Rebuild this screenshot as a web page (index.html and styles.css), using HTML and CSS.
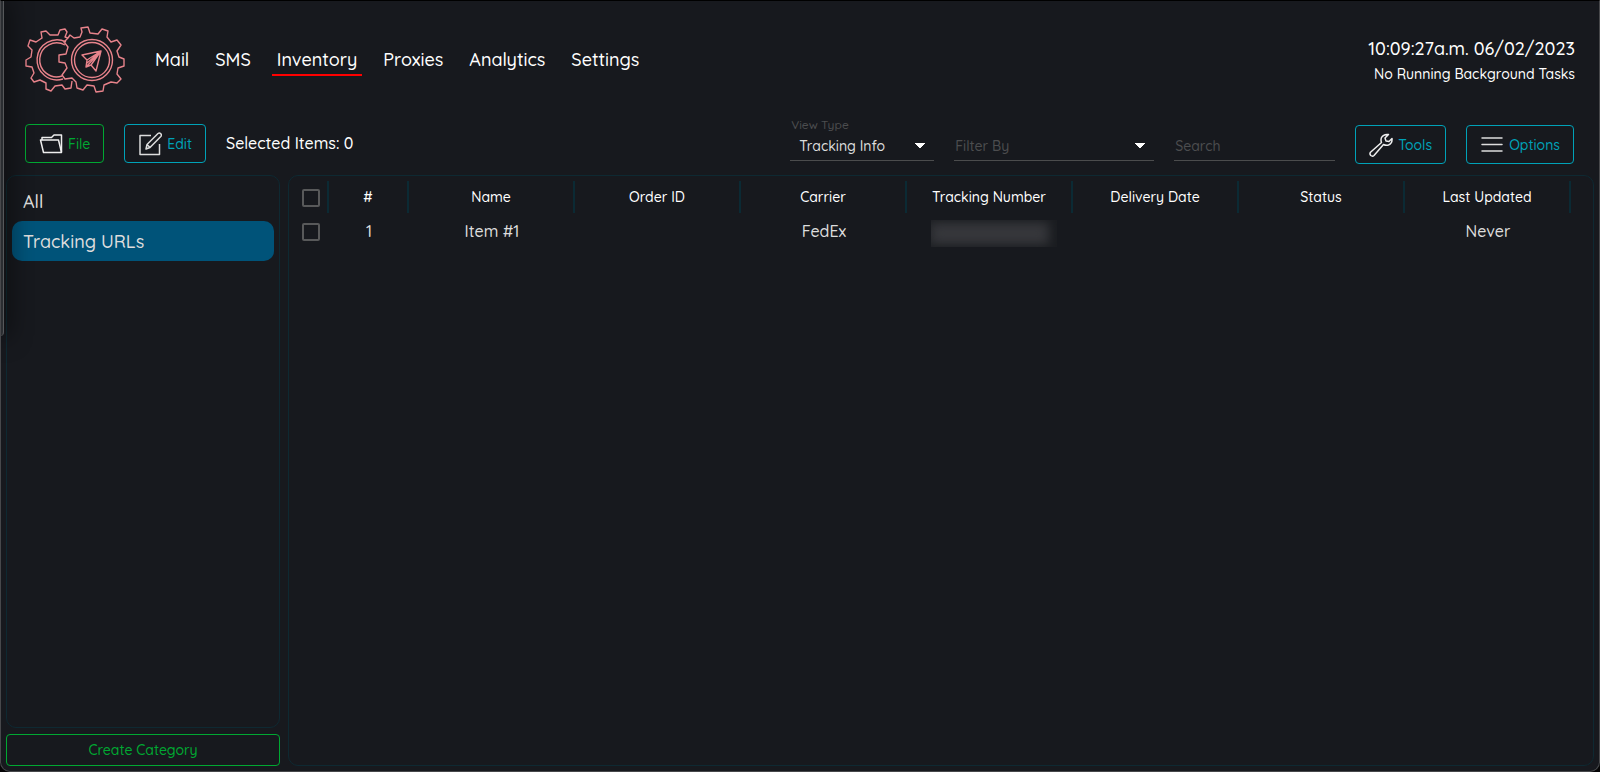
FILE: index.html
```html
<!DOCTYPE html>
<html lang="en">
  <head>
    <meta charset="UTF-8" />
    <meta name="viewport" content="width=device-width, initial-scale=1.0" />
    <title>Inventory</title>
    <link rel="stylesheet" href="styles.css">
  </head>

  <body>
    <div class="app">
      <header class="header">
        <svg class="logo" viewBox="0 0 100 68" fill="none" stroke="#e8838b" stroke-width="1.4" stroke-linejoin="round">
          <path d="M43 12 L40 11 L42 6 L40 3 L35 4 L33 9 L25 9 L21 5 L16 6 L17 12 L11 16 L5 14 L3 20 L7 24 L6 31 L1 34 L1 40 L7 41 L9 47 L6 52 L9 56 L15 54 L21 57 L21 63 L26 65 L30 60 L37 59 L40 63 L46 62 L47 55" />
          <path d="M43 12 L45 9 L49 12 L55 11 L57 6 L56 2 L63 1 L65 7 L73 8 L77 3 L83 5 L82 11 L86 16 L92 14 L96 19 L92 25 L94 31 L99 33 L99 40 L93 42 L92 48 L96 53 L92 57 L86 56 L79 59 L78 65 L71 66 L69 60 L62 59 L58 64 L52 62 L51 56 L47 52 L40 53 L37 49 L42 42 L40 37 L34 36 L34 29 L41 28 L43 21 L39 16 Z" />
          <path d="M41 16 A20 20 0 1 0 38 53" />
          <path d="M40 19 A17 17 0 1 0 37 50" />
          <circle cx="67" cy="34" r="20.5" />
          <circle cx="67" cy="34" r="17.5" />
          <path d="M76 25 L57 29 L62 34 L61 41 L66 39 L71 45 Z M62 34 L76 25 L61 41 M76 25 L66 39 M76 25 L62 37" />
        </svg>

        <nav class="nav">
          <a href="#">Mail</a>
          <a href="#">SMS</a>
          <a href="#" class="active">Inventory</a>
          <a href="#">Proxies</a>
          <a href="#">Analytics</a>
          <a href="#">Settings</a>
        </nav>

        <div class="status">
          <div class="clock">10:09:27a.m. 06/02/2023</div>
          <div class="tasks">No Running Background Tasks</div>
        </div>
      </header>

      <div class="toolbar">
        <div class="actions">
          <button type="button" class="btn btn-green">
            <svg class="icon" viewBox="0 0 24 24" fill="none" stroke="#eee" stroke-width="1.5" stroke-linejoin="round">
              <path d="M1.500 8 H19.500 L22.500 20.500 H4.500 Z" />
              <path d="M3 8 V5.500 H12.500 L15 3 H22.500 V20" />
            </svg>
            File
          </button>
          <button type="button" class="btn btn-blue">
            <svg class="icon" viewBox="0 0 24 24" fill="none" stroke="#ddd" stroke-width="1.5" stroke-linejoin="round">
              <path d="M13 3.500 H2 V22.500 H21.500 V12" />
              <path d="M8 17 L9 12.500 L20 1.500 Q21.500 0.500 22.800 1.800 Q24 3.200 22.800 4.500 L12 15.500 Z M9 12.500 L12 15.500" />
            </svg>
            Edit
          </button>
          <span class="selected">Selected Items: 0</span>
        </div>

        <div class="filters">
          <div class="field view-field">
            <label for="viewType">View Type</label>
            <select id="viewType">
              <option>Tracking Info</option>
            </select>
          </div>
          <div class="field filter-field">
            <select id="filterBy" class="empty" aria-label="Filter By">
              <option>Filter By</option>
            </select>
          </div>
          <div class="field search-field">
            <input type="text" id="search" placeholder="Search" aria-label="Search" />
          </div>
        </div>

        <button type="button" class="btn btn-blue">
          <svg class="icon" viewBox="0 0 24 24" fill="none" stroke="#eee" stroke-width="1.5" stroke-linejoin="round">
            <path d="M19.500 1.500 L16 5 L17 8 L20 8.500 L23 5.500 Q23.500 10.500 19.500 12 Q17 12.800 14.500 11.500 L5 22.500 Q3.500 23.800 1.800 22.500 Q0.300 21 1.500 19.300 L12.500 9.500 Q11.500 7 12.500 4.500 Q14.500 0.800 19.500 1.500 Z" />
          </svg>
          Tools
        </button>
        <button type="button" class="btn btn-blue">
          <svg class="icon" viewBox="0 0 24 24" fill="none" stroke="#ddd" stroke-width="1.5" stroke-linecap="round">
            <path d="M2 5 H22 M2 11.500 H22 M2 18 H22" />
          </svg>
          Options
        </button>
      </div>

      <main class="content">
        <aside class="sidebar">
          <div class="panel categories">
            <a href="#">All</a>
            <a href="#" class="active">Tracking URLs</a>
          </div>
          <button type="button" class="create">Create Category</button>
        </aside>

        <section class="panel items">
          <table>
            <colgroup>
              <col class="col-check" />
              <col class="col-num" />
              <col span="7" />
              <col class="col-end" />
            </colgroup>
            <thead>
              <tr>
                <th><input type="checkbox" aria-label="Select all items" /></th>
                <th>#</th>
                <th>Name</th>
                <th>Order ID</th>
                <th>Carrier</th>
                <th>Tracking Number</th>
                <th>Delivery Date</th>
                <th>Status</th>
                <th>Last Updated</th>
                <td></td>
              </tr>
            </thead>
            <tbody>
              <tr>
                <td><input type="checkbox" aria-label="Select Item #1" /></td>
                <td>1</td>
                <td>Item #1</td>
                <td></td>
                <td>FedEx</td>
                <td><div class="redacted"></div></td>
                <td></td>
                <td></td>
                <td>Never</td>
                <td></td>
              </tr>
            </tbody>
          </table>
        </section>
      </main>

      <!-- edge of the window behind this one -->
      <div class="behind"></div>
    </div>
  </body>
</html>
```
FILE: styles.css
```css
* {
  box-sizing: border-box;
}

body {
  margin: 0;
  background-color: #050506;
  color: #fff;
  font-family: Quicksand, Lato, sans-serif;
  font-size: 14px;
  font-weight: 500;
}

button,
input,
select {
  font-family: inherit;
  font-size: 14px;
  font-weight: 500;
}

a {
  color: inherit;
  text-decoration: none;
}

.app {
  position: relative;
  display: flex;
  flex-direction: column;
  min-height: 100vh;
  padding: 0 5px 5px;
  background-color: #17191e;
  border: 1px solid #47484b;
  border-top-color: #000;
  border-radius: 0 0 10px 10px;
  overflow: hidden;
}

/* header */

.header {
  display: flex;
  align-items: center;
  height: 118px;
  padding: 0 19px;
}

.logo {
  width: 100px;
  height: 68px;
}

.nav {
  display: flex;
  gap: 16px;
  margin-left: 25px;
}

.nav a {
  padding: 2px 5px 0;
  font-size: 18px;
  line-height: 28px;
  border-bottom: 2px solid transparent;
}

.nav a.active {
  border-bottom-color: #f00;
}

.status {
  margin-left: auto;
  padding-top: 2px;
  text-align: right;
}

.clock {
  font-size: 18px;
  line-height: 26px;
}

.tasks {
  font-size: 14px;
  line-height: 24px;
}

/* toolbar */

.toolbar {
  display: flex;
  align-items: center;
  gap: 20px;
  height: 50px;
  padding: 0 20px 0 19px;
}

.actions {
  display: flex;
  align-items: center;
  gap: 20px;
  padding-bottom: 2px;
}

.btn {
  display: flex;
  align-items: center;
  gap: 5px;
  height: 39px;
  padding: 1px 13px 0;
  background: none;
  border: 1px solid;
  border-radius: 4px;
  cursor: pointer;
}

.btn-green {
  color: #00a832;
}

.btn-blue {
  color: #00a2b8;
}

.icon {
  width: 24px;
  height: 24px;
}

.selected {
  font-size: 16px;
}

.filters {
  display: flex;
  align-items: flex-end;
  gap: 20px;
  margin-left: auto;
  padding-bottom: 8px;
}

.field {
  display: flex;
  flex-direction: column;
}

.field label {
  padding-left: 1px;
  color: #4c4d4f;
  font-size: 12px;
  line-height: 12px;
}

.field select,
.field input {
  height: 30px;
  padding: 0 1px;
  background-color: transparent;
  border: none;
  border-bottom: 1px solid #4b4c4d;
  border-radius: 0;
  color: #ddd;
  outline: none;
}

.field select {
  appearance: none;
  background-image: linear-gradient(to bottom left, #fff 50%, transparent 50%),
    linear-gradient(to bottom right, #fff 50%, transparent 50%);
  background-position: right 14px center, right 9px center;
  background-size: 5px 6px;
  background-repeat: no-repeat;
}

.field select.empty,
.field input::placeholder {
  color: #4c4d4f;
}

.view-field {
  width: 144px;
}

.field #viewType {
  padding-left: 9px;
}

.filter-field {
  width: 200px;
}

.search-field {
  width: 161px;
}

/* content */

.content {
  display: flex;
  flex: 1;
  gap: 8px;
  padding-top: 6px;
}

.panel {
  border: 1px solid #0e2932;
  border-radius: 10px;
}

.sidebar {
  display: flex;
  flex-direction: column;
  gap: 6px;
  width: 274px;
}

.categories {
  flex: 1;
  padding: 5px;
}

.categories a {
  display: block;
  height: 40px;
  padding: 0 11px;
  border-radius: 10px;
  color: #ddd;
  font-size: 18px;
  line-height: 42px;
}

.categories a.active {
  background-color: #005379;
}

.create {
  height: 32px;
  background: none;
  border: 1px solid #00a832;
  border-radius: 4px;
  color: #00a832;
  cursor: pointer;
}

.items {
  flex: 1;
  padding-top: 5px;
}

table {
  width: 100%;
  table-layout: fixed;
  border-collapse: separate;
  border-spacing: 0;
}

.col-check {
  width: 40px;
}

.col-num {
  width: 80px;
}

.col-end {
  width: 22px;
}

th,
td {
  padding: 0;
  text-align: center;
}

th {
  height: 32px;
  border-right: 2px solid #0b2a34;
  font-weight: 500;
}

tbody td {
  height: 36px;
  color: #ddd;
  font-size: 16px;
}

input[type="checkbox"] {
  display: block;
  width: 18px;
  height: 18px;
  margin: 2px 0 0 13px;
  appearance: none;
  border: 2px solid #58595a;
  border-radius: 2px;
}

.redacted {
  width: 126px;
  height: 27px;
  margin: 4px 0 0 24px;
  background-color: #37383c;
  box-shadow: inset -8px 0 12px #1a1c20, inset 0 0 12px #232529;
}

.behind {
  position: absolute;
  top: 0;
  left: -1px;
  width: 4px;
  height: 335px;
  background-color: #2a2d31;
  border-right: 1px solid #56585a;
  border-radius: 0 0 5px 0;
  box-shadow: 0 0 24px 2px #000;
}
```
